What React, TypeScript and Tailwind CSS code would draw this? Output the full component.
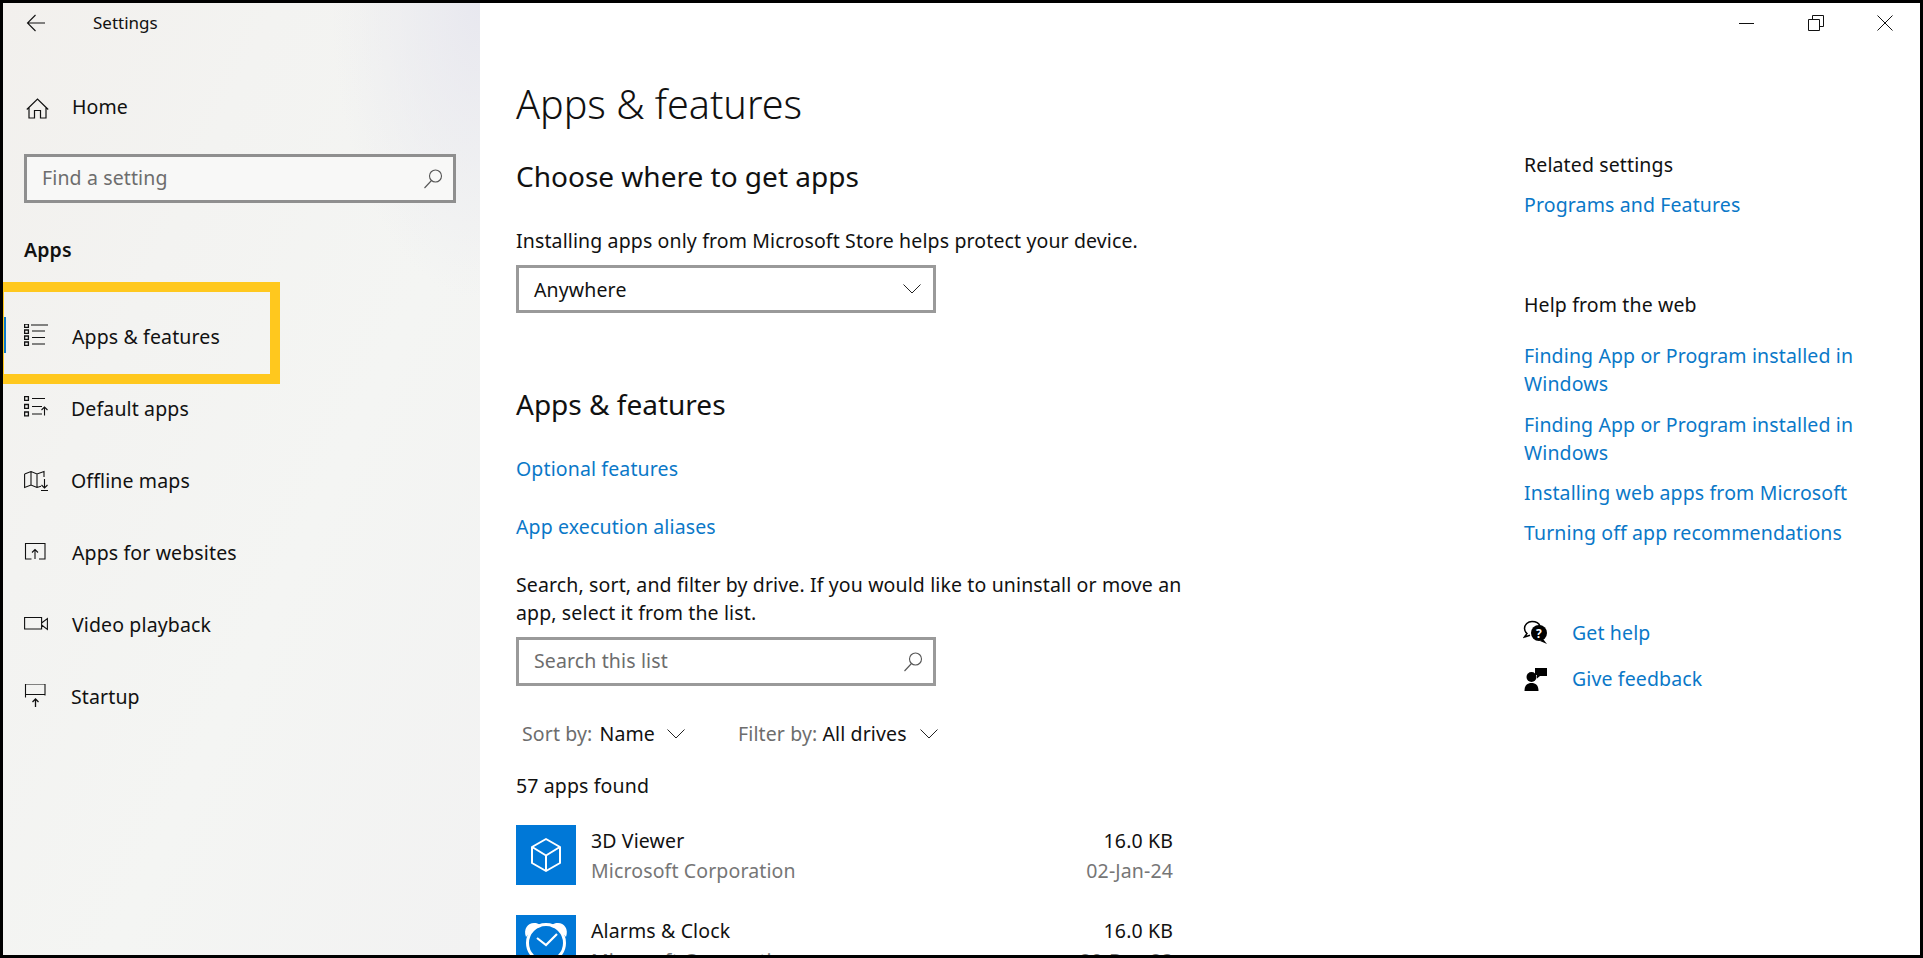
import { ReactNode } from "react";

const navItems = [
  { label: "Apps & features", icon: <ListIcon />, textClass: "ml-[24px]" },
  { label: "Default apps", icon: <DefaultAppsIcon />, textClass: "ml-[23px]" },
  { label: "Offline maps", icon: <MapIcon />, textClass: "ml-[23px]" },
  { label: "Apps for websites", icon: <WebsitesIcon />, textClass: "ml-[24px]" },
  { label: "Video playback", icon: <VideoIcon />, textClass: "ml-[24px]" },
  { label: "Startup", icon: <StartupIcon />, textClass: "ml-[23px]" },
];

function Svg({ children }: { children: ReactNode }) {
  return (
    <svg width="24" height="24" viewBox="0 0 24 24" fill="none" stroke="#111" strokeWidth="1.100" className="shrink-0">
      {children}
    </svg>
  );
}

function ListIcon() {
  return (
    <Svg>
      <path d="M.6 .1h3.800v3.300H.6zM.6 6h3.800v3.300H.6zM.6 12h3.800v3.300H.6zM.6 18h3.800v3.300H.6z" strokeWidth="1.300" />
      <path d="M7 1h17M8 7h13M8 13.500h13M8 20h13" />
    </Svg>
  );
}

function DefaultAppsIcon() {
  return (
    <Svg>
      <path d="M.6 .6h3.800v3.800H.6zM.6 8.500h3.800v3.800H.6zM.6 16h3.800v3.800H.6z" strokeWidth="1.300" />
      <path d="M8 2.500h13M8 10.500h10M8 18h10M20.500 19.500V11M17.500 14l3-3 3 3" />
    </Svg>
  );
}

function MapIcon() {
  return (
    <Svg>
      <path d="M.6 6v13.500L7 17l6 2.500 4-1.300M.6 6L7 3.500 13 6l7-2.500V9M7 3.500V17M13 6v13.500" />
      <path d="M20.500 11v9M17.500 17l3 3 3-3M17 22.500h7" />
    </Svg>
  );
}

function WebsitesIcon() {
  return (
    <Svg>
      <path d="M7.500 19H1.500V3.500h19.500V19h-6" />
      <path d="M11 19V9.500M8 12.500l3-3 3 3" />
    </Svg>
  );
}

function VideoIcon() {
  return (
    <Svg>
      <path d="M.6 5.500h17v11.500H.6zM17.600 11l5.800-4.500v11L17.600 13" />
    </Svg>
  );
}

function StartupIcon() {
  return (
    <Svg>
      <path d="M1.500 0h19.500v10.500H1.500zM1.500 10.500v3M21 10.500v1" />
      <path d="M11.500 23V15M8.500 18l3-3 3 3" strokeWidth="1.300" />
    </Svg>
  );
}

function SearchIcon() {
  return (
    <svg width="20" height="20" viewBox="0 0 20 20" fill="none" stroke="#555" strokeWidth="1.100">
      <circle cx="12.500" cy="7" r="6" />
      <path d="M8.500 11.500L1.500 19" />
    </svg>
  );
}

function Chevron() {
  return (
    <svg width="18" height="10" viewBox="0 0 18 10" fill="none" stroke="#222" strokeWidth="1" className="shrink-0">
      <path d="M.5 .5L9 9l8.500-8.500" />
    </svg>
  );
}

function LinkRow({ children, className = "" }: { children: ReactNode; className?: string }) {
  return <div className={`text-[#0a78c8] leading-[28px] ${className}`}>{children}</div>;
}

function AppRow({ name, size, date, icon, className = "" }: { name: string; size: string; date: string; icon: ReactNode; className?: string }) {
  return (
    <div className={`flex w-[657px] h-[60px] shrink-0 ${className}`}>
      <div className="w-[60px] h-[60px] bg-[#0078d7] flex items-center justify-center shrink-0">{icon}</div>
      <div className="ml-[15px] flex-1 flex flex-col pt-px leading-[30px]">
        <div className="flex justify-between">
          <span>{name}</span>
          <span>{size}</span>
        </div>
        <div className="flex justify-between text-[#767676]">
          <span>Microsoft Corporation</span>
          <span>{date}</span>
        </div>
      </div>
    </div>
  );
}

export default function App() {
  return (
    <div className="relative w-[1923px] h-[958px] border-[3px] border-black bg-white overflow-hidden flex text-[19.5px] text-[#111] font-['Noto_Sans','Open_Sans',sans-serif] tracking-[0.13px]">
      {/* sidebar */}
      <div className="w-[477px] h-full shrink-0 flex flex-col bg-[radial-gradient(ellipse_at_100%_0%,#e8e8ef_0%,transparent_22%),linear-gradient(115deg,#f2f0ed_0%,#f3f3f1_30%,#f4f5f3_60%,#f2f2f2_100%)]">
        <div className="h-[40px] shrink-0 flex items-center pl-[23px]">
          <svg width="20" height="18" viewBox="0 0 20 18" fill="none" stroke="#111" strokeWidth="1.100">
            <path d="M19 9H1.500M9.500 1L1.500 9l8 8" />
          </svg>
          <span className="ml-[47px] text-[17px] tracking-normal">Settings</span>
        </div>
        <div className="h-[48px] mt-[41px] shrink-0 flex items-center pl-[23px]">
          <svg width="23" height="21" viewBox="0 0 23 21" fill="none" stroke="#111" strokeWidth="1.200" className="shrink-0">
            <path d="M.8 11.500L11.500 1l10.700 10.500M3 9.500v10.500h5.500v-7.500h6v7.500h5.500V9.500" />
          </svg>
          <span className="ml-[23px] pb-[2px]">Home</span>
        </div>
        <div className="ml-[21px] mt-[22px] w-[432px] h-[49px] shrink-0 border-[3px] border-[#8f8f8f] bg-[#f8f8f7] flex items-center justify-between pl-[15px] pr-[10px] text-[#6d6d6d]">
          <span className="pb-[2px]">Find a setting</span>
          <SearchIcon />
        </div>
        <div className="h-[40px] mt-[27px] shrink-0 flex items-center pl-[21px] font-semibold">Apps</div>
        <div className="mt-[30px] flex flex-col">
          {navItems.map((item) => (
            <div key={item.label} className="h-[72px] flex items-center pl-[21px]">
              <span className="w-[24px] flex">{item.icon}</span>
              <span className={`${item.textClass} pt-[2px]`}>{item.label}</span>
            </div>
          ))}
        </div>
      </div>

      {/* main column */}
      <div className="w-[1044px] shrink-0 h-full flex flex-col pl-[36px]">
        <div className="mt-[72px] h-[60px] shrink-0 flex items-center text-[39.500px] font-light tracking-normal">Apps &amp; features</div>
        <div className="mt-[21px] h-[40px] shrink-0 flex items-center text-[28px] tracking-normal">Choose where to get apps</div>
        <div className="mt-[31px] leading-[28px]">Installing apps only from Microsoft Store helps protect your device.</div>
        <div className="mt-[10px] w-[420px] h-[48px] shrink-0 border-[3px] border-[#9a9a9a] flex items-center justify-between pl-[15px] pr-[12px]">
          <span className="pt-[2px]">Anywhere</span>
          <Chevron />
        </div>
        <div className="mt-[71px] h-[40px] shrink-0 flex items-center text-[28px] tracking-normal">Apps &amp; features</div>
        <LinkRow className="mt-[31px]">Optional features</LinkRow>
        <LinkRow className="mt-[30px]">App execution aliases</LinkRow>
        <div className="mt-[30px] w-[680px] leading-[28px]">
          Search, sort, and filter by drive. If you would like to uninstall or move an app, select it from the list.
        </div>
        <div className="mt-[10px] w-[420px] h-[49px] shrink-0 border-[3px] border-[#9a9a9a] flex items-center justify-between pl-[15px] pr-[10px] text-[#6d6d6d]">
          <span className="pb-[2px]">Search this list</span>
          <SearchIcon />
        </div>
        <div className="mt-[34px] h-[28px] shrink-0 flex items-center pl-[6px]">
          <span className="text-[#6d6d6d]">Sort by:</span>
          <span className="ml-[7px]">Name</span>
          <span className="ml-[12px] flex"><Chevron /></span>
          <span className="ml-[53px] text-[#6d6d6d]">Filter by:</span>
          <span className="ml-[5px]">All drives</span>
          <span className="ml-[13px] flex"><Chevron /></span>
        </div>
        <div className="mt-[24px] leading-[28px]">57 apps found</div>
        <AppRow
          className="mt-[25px]"
          name="3D Viewer"
          size="16.0 KB"
          date="02-Jan-24"
          icon={
            <svg width="32" height="36" viewBox="0 0 32 36" fill="none" stroke="#fff" strokeWidth="2" strokeLinejoin="round">
              <path d="M16 2L30 10v16L16 34 2 26V10zM3 10.500l13 8 13-8M16 18.500V33" />
            </svg>
          }
        />
        <AppRow
          className="mt-[30px]"
          name="Alarms & Clock"
          size="16.0 KB"
          date="20-Dec-23"
          icon={
            <svg width="60" height="60" viewBox="0 0 60 60" fill="none" stroke="#fff" strokeWidth="3">
              <circle cx="30" cy="28" r="18.500" />
              <path d="M10 22c-3-8 2-14 8-14 4 0 7 2 7 4-6 1-11 5-15 10zM50 22c3-8-2-14-8-14-4 0-7 2-7 4 6 1 11 5 15 10z" fill="#fff" stroke="none" />
              <path d="M21 23l9 7 11-11" strokeWidth="2.200" />
            </svg>
          }
        />
      </div>

      {/* right column */}
      <div className="flex-1 h-full flex flex-col">
        <div className="h-[40px] shrink-0 flex justify-end pr-px">
          <div className="w-[69px] flex items-center justify-center">
            <div className="w-[15px] h-px bg-[#111]" />
          </div>
          <div className="w-[69px] flex items-center justify-center">
            <svg width="16" height="16" viewBox="0 0 16 16" fill="none" stroke="#111" strokeWidth="1">
              <path d="M.5 4.500h11v11H.5zM4.500 4V.5h11v11H12" />
            </svg>
          </div>
          <div className="w-[69px] flex items-center justify-center">
            <svg width="16" height="16" viewBox="0 0 16 16" fill="none" stroke="#111" strokeWidth="1">
              <path d="M.5 .5l15 15M15.500 .5l-15 15" />
            </svg>
          </div>
        </div>
        <div className="mt-[108px] leading-[28px]">Related settings</div>
        <LinkRow className="mt-[12px]">Programs and Features</LinkRow>
        <div className="mt-[72px] leading-[28px]">Help from the web</div>
        <LinkRow className="mt-[23px] w-[345px]">Finding App or Program installed in Windows</LinkRow>
        <LinkRow className="mt-[13px] w-[345px]">Finding App or Program installed in Windows</LinkRow>
        <LinkRow className="mt-[12px]">Installing web apps from Microsoft</LinkRow>
        <LinkRow className="mt-[12px]">Turning off app recommendations</LinkRow>
        <div className="mt-[72px] h-[28px] flex items-center text-[#0a78c8]">
          <svg width="25" height="25" viewBox="0 0 25 25" className="shrink-0 -ml-px -mt-[2px]">
            <path d="M9 1.500C5 1.500 1.500 4.500 1.500 8.500c0 2 1 3.800 2.500 5L1.500 17l5.500-1.800" fill="none" stroke="#000" strokeWidth="1.500" />
            <path d="M9 1.500c4 0 7 1.800 8 4.500" fill="none" stroke="#000" strokeWidth="1.500" />
            <circle cx="16" cy="13" r="8" fill="#000" />
            <path d="M20 19l4 5-7-3z" fill="#000" />
            <text x="16" y="17.500" textAnchor="middle" fontSize="12" fontWeight="700" fill="#fff" stroke="none">?</text>
          </svg>
          <span className="ml-[24px]">Get help</span>
        </div>
        <div className="mt-[18px] h-[28px] flex items-center text-[#0a78c8]">
          <svg width="24" height="24" viewBox="0 0 24 24" className="shrink-0">
            <circle cx="7.500" cy="10" r="5" fill="#000" />
            <path d="M.5 24c0-6 3-8 7-8s7 2 7 8z" fill="#000" />
            <path d="M11 1h12v8h-7l-3 2.500V8h-2z" fill="#000" />
          </svg>
          <span className="ml-[24px]">Give feedback</span>
        </div>
      </div>

      {/* highlight drawn over the sidebar */}
      <div className="absolute left-[-3px] top-[279px] w-[280px] h-[102px] border-y-[10px] border-r-[10px] border-l-[4px] border-[#ffc81e] pointer-events-none">
        <div className="absolute left-0 top-[25px] w-[2px] h-[36px] bg-[#0a78c8]" />
      </div>
    </div>
  );
}
